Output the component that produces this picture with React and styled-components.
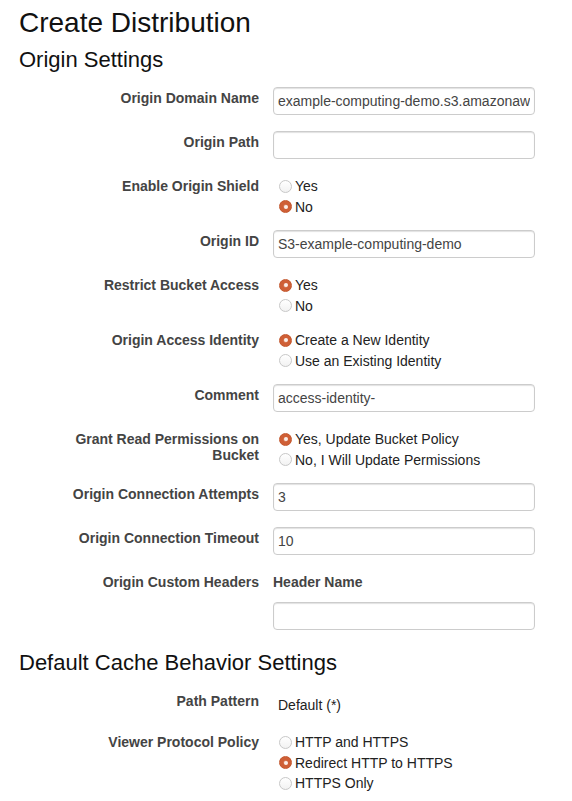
import React from "react";
import styled, { createGlobalStyle } from "styled-components";

const Global = createGlobalStyle`
  html, body { margin: 0; padding: 0; background: #fff; }
  body { font-family: "Liberation Sans", Arial, sans-serif; font-size: 14px; color: #333; }
  * { box-sizing: border-box; }
`;

const Page = styled.div`
  padding: 8px 19px 0 19px;
  width: 572px;
`;

const Title = styled.h1`
  margin: 0 0 9px;
  font-size: 28px;
  line-height: 1.1;
  font-weight: 400;
  color: #111;
`;

const SectionTitle = styled.h2`
  margin: ${(p) => (p.$first ? "0 0 15px" : "21px 0 15px")};
  font-size: 22px;
  line-height: 1.1;
  font-weight: 400;
  color: #111;
`;

const Form = styled.div`
  padding-left: 40px;
`;

const Row = styled.div`
  display: grid;
  grid-template-columns: 200px 262px;
  column-gap: 14px;
  align-items: start;
  margin-bottom: 16px;
`;

const Label = styled.div`
  padding-top: 3px;
  text-align: right;
  font-weight: 700;
  font-size: 14px;
  line-height: 16px;
  color: #444;
`;

const Field = styled.div`
  display: flex;
  flex-direction: column;
`;

const SubLabel = styled.div`
  padding-top: 3px;
  font-weight: 700;
  line-height: 16px;
  color: #444;
  margin-bottom: 12px;
`;

const Input = styled.input`
  width: 262px;
  height: 28px;
  padding: 0 4px;
  border: 1px solid #ccc;
  border-radius: 4px;
  box-shadow: inset 0 1px 1px rgba(0, 0, 0, 0.12);
  font-family: "Liberation Sans", Arial, sans-serif;
  font-size: 14px;
  color: #444;
  background: #fff;
  outline: none;
`;

const Value = styled.div`
  padding: 5px 0 0 5px;
  line-height: 20px;
  color: #222;
`;

const RadioGroup = styled.div`
  margin: 1px 0 -3px;
  display: flex;
  flex-direction: column;
`;

const Option = styled.label`
  display: flex;
  align-items: center;
  height: 20.5px;
  line-height: 20px;
  color: #222;
  font-size: 14px;
`;

const Radio = styled.span`
  width: 13px;
  height: 13px;
  margin: 0 3px 0 6px;
  border-radius: 50%;
  flex: none;
  display: flex;
  align-items: center;
  justify-content: center;
  border: 1px solid ${(p) => (p.$checked ? "#c3562c" : "#c8c8c8")};
  background: ${(p) =>
    p.$checked
      ? "radial-gradient(circle, #d98a6a 0 1.5px, #cf5f36 2.5px)"
      : "linear-gradient(#fff, #f2f2f2)"};
  &::after {
    content: "";
    display: ${(p) => (p.$checked ? "block" : "none")};
    width: 4px;
    height: 4px;
    border-radius: 50%;
    background: #fbeee8;
  }
`;

const Radios = ({ options, checked }) => (
  <RadioGroup>
    {options.map((o, i) => (
      <Option key={o}>
        <Radio $checked={i === checked} />
        {o}
      </Option>
    ))}
  </RadioGroup>
);

const InputRow = ({ label, value }) => (
  <Row>
    <Label>{label}</Label>
    <Field>
      <Input readOnly defaultValue={value} />
    </Field>
  </Row>
);

const RadioRow = ({ label, options, checked }) => (
  <Row>
    <Label>{label}</Label>
    <Radios options={options} checked={checked} />
  </Row>
);

export default function App() {
  return (
    <>
      <Global />
      <Page>
        <Title>Create Distribution</Title>
        <SectionTitle $first>Origin Settings</SectionTitle>
        <Form>
          <InputRow label="Origin Domain Name" value="example-computing-demo.s3.amazonaws.com" />
          <InputRow label="Origin Path" value="" />
          <RadioRow label="Enable Origin Shield" options={["Yes", "No"]} checked={1} />
          <InputRow label="Origin ID" value="S3-example-computing-demo" />
          <RadioRow label="Restrict Bucket Access" options={["Yes", "No"]} checked={0} />
          <RadioRow
            label="Origin Access Identity"
            options={["Create a New Identity", "Use an Existing Identity"]}
            checked={0}
          />
          <InputRow label="Comment" value="access-identity-" />
          <RadioRow
            label="Grant Read Permissions on Bucket"
            options={["Yes, Update Bucket Policy", "No, I Will Update Permissions"]}
            checked={0}
          />
          <InputRow label="Origin Connection Attempts" value="3" />
          <InputRow label="Origin Connection Timeout" value="10" />
          <Row>
            <Label>Origin Custom Headers</Label>
            <Field>
              <SubLabel>Header Name</SubLabel>
              <Input readOnly defaultValue="" />
            </Field>
          </Row>
        </Form>
        <SectionTitle>Default Cache Behavior Settings</SectionTitle>
        <Form>
          <Row>
            <Label>Path Pattern</Label>
            <Value>Default (*)</Value>
          </Row>
          <RadioRow
            label="Viewer Protocol Policy"
            options={["HTTP and HTTPS", "Redirect HTTP to HTTPS", "HTTPS Only"]}
            checked={1}
          />
        </Form>
      </Page>
    </>
  );
}
